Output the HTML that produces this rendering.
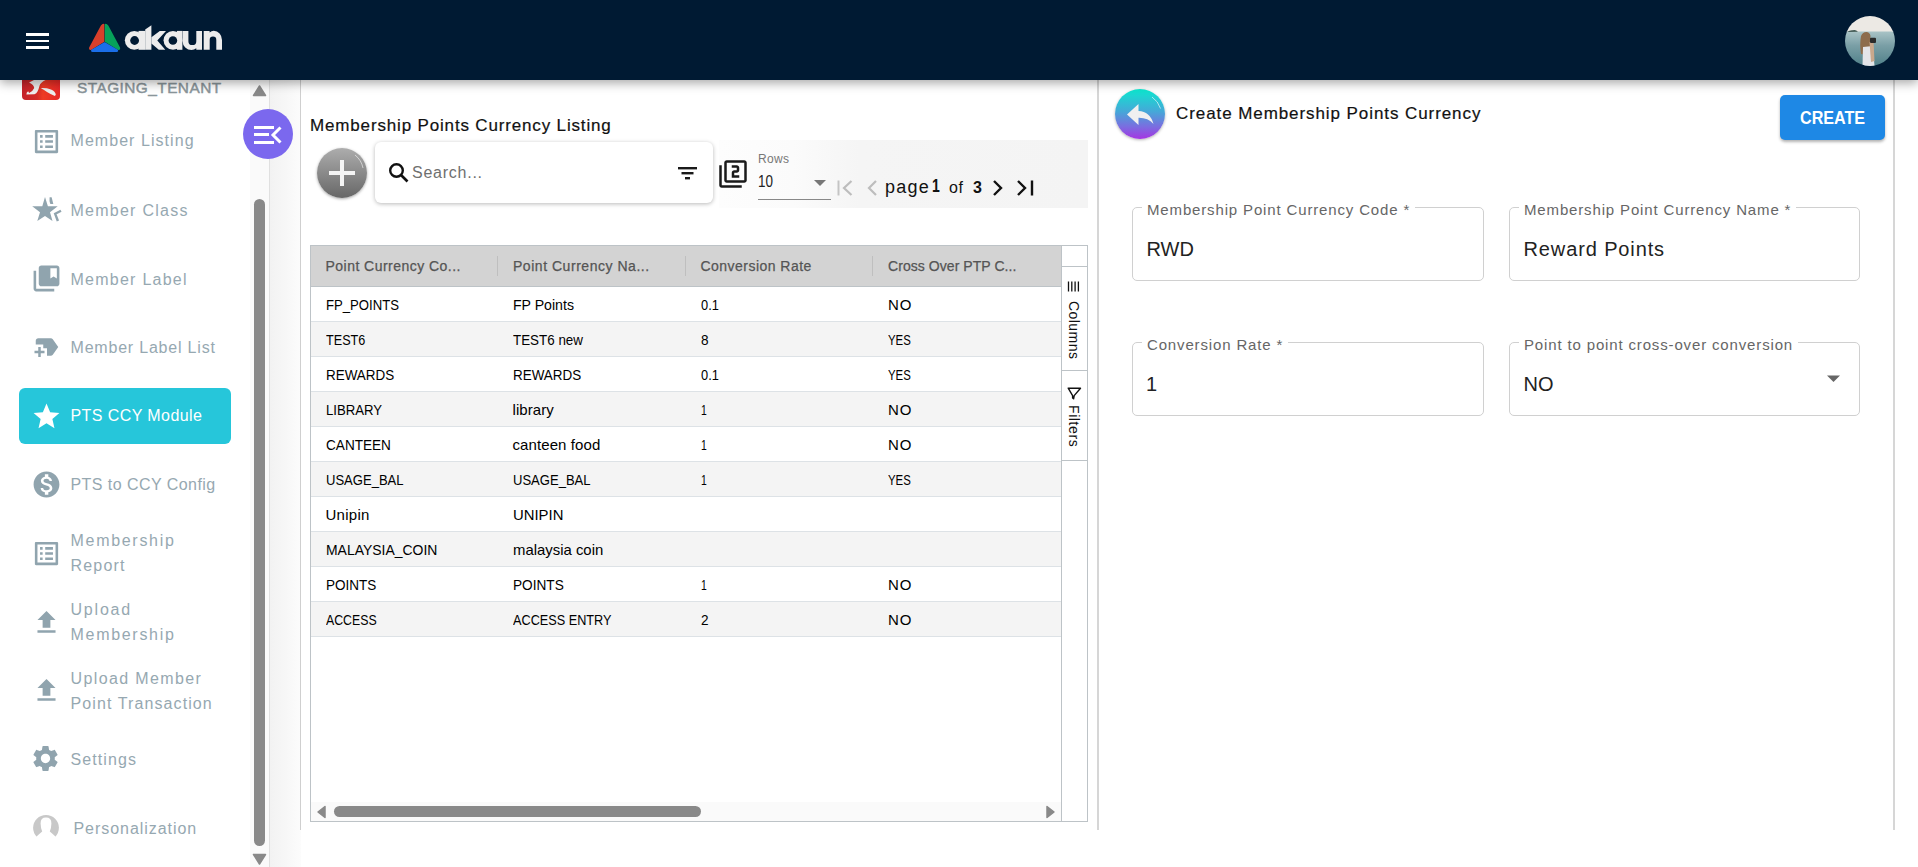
<!DOCTYPE html>
<html><head><meta charset="utf-8">
<style>
*{box-sizing:border-box;margin:0;padding:0}
html,body{width:1918px;height:867px;overflow:hidden;background:#fff;font-family:"Liberation Sans",sans-serif}
.a{position:absolute}
.t{position:absolute;white-space:nowrap;line-height:1;transform-origin:0 0}
#hdr{left:0;top:0;width:1918px;height:80px;background:#001a33;z-index:20;box-shadow:0 3px 10px rgba(0,0,0,.35)}
.hb{position:absolute;left:25.7px;width:23.6px;height:3px;background:#fff}
#side{left:0;top:80px;width:270px;height:787px;background:#fff;border-right:1px solid #e0e0e0;z-index:2}
.si{color:#96a8b1;font-size:16px;letter-spacing:.8px}
.ic{position:absolute}
#gap{left:270px;top:80px;width:31px;height:787px;background:linear-gradient(to right,#f2f2f2,#fcfcfc)}
#cp{left:300px;top:80px;width:798px;height:750px;border-left:1px solid #cfcfcf;background:#fff}
#rp{left:1097px;top:80px;width:798px;height:750px;border-left:2px solid #d6d6d6;border-right:2px solid #d6d6d6;background:#fff}
.row{position:absolute;left:311px;width:750px;height:35px;border-bottom:1px solid #dde2e6}
.row.o{background:#f4f4f4}
.c{font-size:15px;color:#000;top:10px}
.hd{font-size:14px;color:#555;-webkit-text-stroke:.25px #555}
.fld{position:absolute;border:1px solid #d0d0d0;border-radius:5px}
.lbl{position:absolute;white-space:nowrap;line-height:1;font-size:15px;color:#666;letter-spacing:.85px;background:#fff;padding:0 0px}
.val{position:absolute;white-space:nowrap;line-height:1;font-size:20px;color:#222}
</style></head>
<body>
<!-- HEADER -->
<div id="hdr" class="a">
  <div class="hb" style="top:33px"></div>
  <div class="hb" style="top:39.5px;height:2.8px"></div>
  <div class="hb" style="top:46px"></div>
  <svg class="a" style="left:86px;top:20px" width="40" height="36" viewBox="86 20 40 36">
    <g stroke-linejoin="round" stroke-width="1.6">
    <path d="M103.6 24.6 Q102.6 24.6 101.6 26 L90 47.6 Q89.5 49 90.6 49.2 L103.6 41.4 Z" fill="#d9402b" stroke="#d9402b"/>
    <path d="M105.6 24.6 Q106.6 24.6 107.6 26 L119.2 47.6 Q119.7 49 118.6 49.2 L105.6 41.4 Z" fill="#07a25a" stroke="#07a25a"/>
    <path d="M104.6 43 L92.2 50.2 Q91.3 51 92.6 51.1 L116.6 51.1 Q117.9 51 117 50.2 Z" fill="#1b6fe9" stroke="#1b6fe9"/>
    </g>
  </svg>
  <svg class="a" style="left:120px;top:20px" width="110" height="36" viewBox="120 20 110 36">
    <g fill="#ececec">
      <circle cx="134.3" cy="40.35" r="9.45"/><rect x="138.5" y="30.9" width="6.8" height="18.9"/>
      <path d="M145.2 29.6 L151.4 25.2 L151.4 49.8 L145.2 49.8 Z"/>
      <path d="M151.4 37.2 L159.8 30.9 L166 30.9 L157.3 40.4 L165.3 49.8 L158.8 49.8 L151.4 43.6 Z"/>
      <circle cx="173" cy="40.35" r="9.45"/><rect x="177" y="30.9" width="5.4" height="18.9"/>
      <path d="M182.6 30.9 H188.4 V41.15 A3.95 3.95 0 0 0 196.3 41.15 V30.9 H202 V49.8 H196.3 V48.3 Q194.2 50.1 191.6 50.1 A9 8.95 0 0 1 182.6 41.15 Z"/>
      <path d="M203.7 49.8 V30.9 H209.6 V32.4 Q211.4 30.7 213.8 30.7 A8.2 9.2 0 0 1 222 39.9 V49.8 H216.3 V39.9 A3.3 3.3 0 0 0 209.7 39.9 V49.8 Z"/>
    </g>
    <circle cx="134.6" cy="40.5" r="4.4" fill="#001a33"/><circle cx="172.9" cy="40.5" r="4.3" fill="#001a33"/>
  </svg>
  <svg class="a" style="left:1845px;top:16px" width="50" height="50" viewBox="0 0 50 50">
    <defs><clipPath id="av"><circle cx="25" cy="25" r="25"/></clipPath>
    <linearGradient id="sea" x1="0" y1="0" x2="0" y2="1"><stop offset="0" stop-color="#a9c3c6"/><stop offset=".4" stop-color="#7a9fa6"/><stop offset="1" stop-color="#4f7f88"/></linearGradient></defs>
    <g clip-path="url(#av)">
      <rect x="0" y="0" width="50" height="16" fill="#ece9e4"/>
      <rect x="0" y="15.5" width="50" height="35" fill="url(#sea)"/>
      <path d="M2 16 Q5 13.8 8 14.2 Q11 13.6 13 15.8 Z" fill="#3c5550"/>
      <path d="M16 38 Q14.5 28 16 20 Q18 15.5 22 16 Q26 17 25.5 22 L25 39 Z" fill="#8d6c4c"/>
      <path d="M18 31 L28 30 L29.5 50 L17.5 50 Z" fill="#e4e4e8"/>
      <path d="M24.5 26 L28.5 25 L29.5 45 L26 46 Z" fill="#c9a88c"/>
      <rect x="25" y="21.7" width="6" height="5.3" rx="1" fill="#2a2a2a"/>
    </g>
  </svg>
</div>

<!-- SIDEBAR -->
<div id="side" class="a">
  <div class="a" style="left:250px;top:0;width:19px;height:787px;background:#fafafa"></div>
  <div class="a" style="left:254px;top:119px;width:11px;height:647px;border-radius:6px;background:#898989"></div>
  <svg class="a" style="left:252px;top:5px" width="15" height="12"><path d="M7.5 1 L13.5 10.5 L1.5 10.5 Z" fill="#898989" stroke="#898989" stroke-width="1.5" stroke-linejoin="round"/></svg>
  <svg class="a" style="left:252px;top:773px" width="15" height="12"><path d="M1.5 1.5 L13.5 1.5 L7.5 11 Z" fill="#898989" stroke="#898989" stroke-width="1.5" stroke-linejoin="round"/></svg>
  <!-- tenant -->
  <div class="a" style="left:22px;top:-18px;width:38px;height:38px;border-radius:4px;background:linear-gradient(to right,#c4222b,#d42a26 40%,#ee3b24 55%,#e52727)">
    <svg class="a" style="left:0;top:0" width="38" height="38"><path d="M7.1 20.5 L12 18 L23.5 18 Q18.5 20.5 17.6 23.5 Q16.5 28 15.5 29.5 Q14.5 31.8 12.5 32.3 L4.4 32.5 Q4.3 30.3 6.2 29.2 L7.1 31 Q11 29 12.2 25.9 Q12 23 7.1 20.5 Z" fill="#eeeeee"/><path d="M18.8 26.2 Q24 25.8 29 27.5 Q33.5 29.5 33.8 32.8 L32.9 34 Q29 32.5 25 30 Q21.5 27.5 18.8 26.2 Z" fill="#eeeeee"/></svg>
  </div>
  <div class="t" style="left:77px;top:0.3px;font-size:15.4px;font-weight:400;color:#8a959a;letter-spacing:.45px;-webkit-text-stroke:.45px #8a959a">STAGING_TENANT</div>

  <div class="a" style="left:19px;top:308px;width:212px;height:56px;border-radius:6px;background:#26c6da"></div>
  <svg class="ic" style="left:31px;top:46px" width="31" height="31" viewBox="0 0 24 24"><path d="M19 5v14H5V5h14m1.1-2H3.9c-.5 0-.9.4-.9.9v16.2c0 .4.4.9.9.9h16.2c.4 0 .9-.5.9-.9V3.9c0-.5-.5-.9-.9-.9zM11 7h6v2h-6V7zm0 4h6v2h-6v-2zm0 4h6v2h-6zM7 7h2v2H7zm0 4h2v2H7zm0 4h2v2H7z" fill="#90a4ae"/></svg>
  <svg class="ic" style="left:28px;top:112px" width="40" height="36" viewBox="28 192 40 36"><path d="M45 197 L47.9 206.3 L57.7 206.3 L50 212.3 L52.5 221 L45 215.9 L37.3 221 L40 212.3 L32.2 206.3 L42.3 206.3 Z" fill="#90a4ae"/><path d="M49.6 197.2 L51.6 197.2 L53.3 203.9 L50.3 203.9 Q49.1 200.5 49.6 197.2Z" fill="#90a4ae"/><path d="M61 210.8 L55.2 213.8 L57.9 221" fill="none" stroke="#90a4ae" stroke-width="2.4"/></svg>
  <svg class="ic" style="left:31px;top:182.5px" width="31" height="31" viewBox="0 0 24 24"><path d="M4 6H2v14c0 1.1.9 2 2 2h14v-2H4V6zm16-4H8c-1.1 0-2 .9-2 2v12c0 1.1.9 2 2 2h12c1.1 0 2-.9 2-2V4c0-1.1-.9-2-2-2zm0 10l-2.5-1.5L15 12V4h5v8z" fill="#90a4ae"/></svg>
  <svg class="ic" style="left:31.5px;top:251.5px" width="30" height="30" viewBox="0 0 24 24"><path d="M21 12l-4.37 6.16c-.37.52-.98.84-1.63.84h-3v-6H9v-3H3V7c0-1.1.9-2 2-2h10c.65 0 1.26.31 1.63.84L21 12zm-11 3H7v-3H5v3H2v2h3v3h2v-3h3v-2z" fill="#90a4ae"/></svg>
  <svg class="ic" style="left:30.6px;top:320.5px" width="31" height="31" viewBox="0 0 24 24"><path d="M12 17.27L18.18 21l-1.64-7.03L22 9.24l-7.19-.61L12 2 9.19 8.63 2 9.24l5.46 4.73L5.82 21z" fill="#fff"/></svg>
  <svg class="ic" style="left:31px;top:388.5px" width="31" height="31" viewBox="0 0 24 24"><path d="M12 2C6.48 2 2 6.48 2 12s4.48 10 10 10 10-4.48 10-10S17.52 2 12 2zm1.41 16.09V20h-2.67v-1.93c-1.71-.36-3.16-1.460-3.27-3.4h1.96c.1 1.05.82 1.87 2.650 1.87 1.96 0 2.4-.98 2.4-1.59 0-.83-.44-1.61-2.67-2.14-2.48-.6-4.18-1.62-4.180-3.67 0-1.72 1.39-2.84 3.11-3.21V4h2.67v1.95c1.86.45 2.79 1.86 2.85 3.39H14.3c-.05-1.11-.64-1.87-2.22-1.87-1.5 0-2.4.68-2.4 1.64 0 .84.65 1.39 2.67 1.91s4.18 1.39 4.18 3.91c-.01 1.83-1.38 2.83-3.12 3.160z" fill="#90a4ae"/></svg>
  <svg class="ic" style="left:30.7px;top:458px" width="31" height="31" viewBox="0 0 24 24"><path d="M19 5v14H5V5h14m1.1-2H3.9c-.5 0-.9.4-.9.9v16.2c0 .4.4.9.9.9h16.2c.4 0 .9-.5.9-.9V3.9c0-.5-.5-.9-.9-.9zM11 7h6v2h-6V7zm0 4h6v2h-6v-2zm0 4h6v2h-6zM7 7h2v2H7zm0 4h2v2H7zm0 4h2v2H7z" fill="#90a4ae"/></svg>
  <svg class="ic" style="left:31px;top:526.8px" width="31" height="31" viewBox="0 0 24 24"><path d="M9 16h6v-6h4l-7-7-7 7h4zm-4 2h14v2H5z" fill="#90a4ae"/></svg>
  <svg class="ic" style="left:31px;top:595.2px" width="31" height="31" viewBox="0 0 24 24"><path d="M9 16h6v-6h4l-7-7-7 7h4zm-4 2h14v2H5z" fill="#90a4ae"/></svg>
  <svg class="ic" style="left:30.3px;top:663.2px" width="31" height="31" viewBox="0 0 24 24"><path d="M19.14 12.94c.04-.3.06-.61.06-.94 0-.32-.02-.64-.07-.94l2.03-1.58c.18-.14.23-.41.12-.61l-1.92-3.32c-.12-.22-.37-.29-.59-.22l-2.39.96c-.5-.38-1.03-.7-1.62-.94l-.36-2.54c-.04-.24-.24-.41-.48-.41h-3.840c-.24 0-.43.17-.47.41l-.36 2.54c-.59.24-1.130.57-1.62.94l-2.39-.96c-.22-.08-.47 0-.59.22L2.74 8.87c-.12.21-.08.47.12.61l2.03 1.58c-.05.3-.09.63-.09.94s.02.64.07.94l-2.030 1.58c-.18.14-.23.41-.12.61l1.92 3.32c.12.22.37.29.59.22l2.39-.96c.5.38 1.03.7 1.62.94l.36 2.54c.05.24.24.41.48.41h3.84c.24 0 .44-.17.47-.41l.36-2.54c.59-.24 1.13-.56 1.62-.94l2.39.96c.22.08.47 0 .59-.22l1.92-3.32c.12-.22.07-.47-.12-.61l-2.01-1.58zM12 15.6c-1.98 0-3.6-1.62-3.6-3.6s1.62-3.6 3.6-3.6 3.6 1.62 3.6 3.6-1.62 3.6-3.6 3.6z" fill="#90a4ae"/></svg>
  <svg class="ic" style="left:32px;top:734px" width="28" height="24" viewBox="32 814 28 24"><defs><clipPath id="pc"><rect x="30" y="810" width="32" height="27"/></clipPath></defs><g clip-path="url(#pc)"><circle cx="46" cy="827.8" r="12.9" fill="#c8c8c8"/><path d="M46 817.6 Q51.5 817.6 51.4 823.5 Q51.3 828 49.8 831.4 Q53 834 56 837 L36 837 Q39 834 42.2 831.4 Q40.7 828 40.6 823.5 Q40.5 817.6 46 817.6Z" fill="#fff"/></g></svg>
  <div class="t si" style="left:70.5px;top:52.5px;letter-spacing:1.05px">Member Listing</div>
  <div class="t si" style="left:70.5px;top:122.5px;letter-spacing:1.25px">Member Class</div>
  <div class="t si" style="left:70.5px;top:191.5px;letter-spacing:1.25px">Member Label</div>
  <div class="t si" style="left:70.5px;top:259.5px;letter-spacing:.8px">Member Label List</div>
  <div class="t si" style="left:70.5px;top:328px;color:#fff;letter-spacing:.42px">PTS CCY Module</div>
  <div class="t si" style="left:70.5px;top:396.5px;letter-spacing:.45px">PTS to CCY Config</div>
  <div class="t si" style="left:70.5px;top:453px;letter-spacing:1.7px">Membership</div>
  <div class="t si" style="left:70.5px;top:478px;letter-spacing:1.2px">Report</div>
  <div class="t si" style="left:70.5px;top:522px;letter-spacing:1.8px">Upload</div>
  <div class="t si" style="left:70.5px;top:547px;letter-spacing:1.7px">Membership</div>
  <div class="t si" style="left:70.5px;top:591px;letter-spacing:1.38px">Upload Member</div>
  <div class="t si" style="left:70.5px;top:616px;letter-spacing:1.1px">Point Transaction</div>
  <div class="t si" style="left:70.5px;top:671.5px;letter-spacing:1.1px">Settings</div>
  <div class="t si" style="left:73.5px;top:740.5px;letter-spacing:.95px">Personalization</div>
</div>

<div id="gap" class="a"></div>

<!-- CONTENT PANEL -->
<div id="cp" class="a"></div>
<div class="t" style="left:310px;top:117.3px;font-size:17px;color:#111;letter-spacing:.84px;-webkit-text-stroke:.2px #111">Membership Points Currency Listing</div>

<!-- purple toggle -->
<div class="a" style="left:243px;top:109px;width:50px;height:50px;border-radius:50%;background:#7b68ee;z-index:5">
  <div class="a" style="left:11px;top:17px;width:20px;height:3px;background:#fff"></div>
  <div class="a" style="left:11px;top:24px;width:15px;height:3px;background:#fff"></div>
  <div class="a" style="left:11px;top:32px;width:20px;height:3px;background:#fff"></div>
  <svg class="a" style="left:26px;top:17px" width="14" height="18"><path d="M11.5 1.5 L4 9 L11.5 16.5" fill="none" stroke="#fff" stroke-width="3"/></svg>
</div>

<!-- plus button -->
<div class="a" style="left:317px;top:148px;width:50px;height:50px;border-radius:50%;background:linear-gradient(#adadad,#676767);box-shadow:0 1px 3px rgba(0,0,0,.35)">
  <div class="a" style="left:12px;top:23px;width:26px;height:4px;background:#f4f4f4"></div>
  <div class="a" style="left:23px;top:12px;width:4px;height:26px;background:#f4f4f4"></div>
  <svg class="a" style="left:0;top:0" width="50" height="50"><path d="M38 7 A22 22 0 0 1 46 20" fill="none" stroke="rgba(255,255,255,.55)" stroke-width="1"/></svg>
</div>
<!-- search -->
<div class="a" style="left:375px;top:142px;width:338px;height:61px;border-radius:6px;background:#fff;box-shadow:0 1px 4px rgba(0,0,0,.28)"></div>
<svg class="a" style="left:388px;top:162px" width="22" height="22"><circle cx="8.5" cy="8.5" r="6.3" fill="none" stroke="#111" stroke-width="2.4"/><path d="M13 13 L19.5 19.5" stroke="#111" stroke-width="2.6"/></svg>
<div class="t" style="left:412px;top:164.5px;font-size:16px;color:#6f6f6f;letter-spacing:.75px">Search...</div>
<svg class="a" style="left:677px;top:165px" width="22" height="16"><rect x="1" y="2" width="19" height="2.4" fill="#1a1a1a"/><rect x="4.5" y="7" width="12" height="2.4" fill="#1a1a1a"/><rect x="8" y="12" width="5" height="2.4" fill="#1a1a1a"/></svg>

<!-- pagination band -->
<div class="a" style="left:719px;top:140px;width:369px;height:68px;background:linear-gradient(to right,#fdfdfd 0,#fbfbfb 20%,#f5f5f5 38%,#f4f4f4 100%)"></div>
<svg class="a" style="left:717.8px;top:159px" width="30" height="30" viewBox="0 0 24 24"><path d="M3 5H1v16c0 1.1.9 2 2 2h16v-2H3V5zm18-4H7c-1.1 0-2 .9-2 2v14c0 1.1.9 2 2 2h14c1.1 0 2-.9 2-2V3c0-1.1-.9-2-2-2zm0 16H7V3h14v14zm-4-4h-4v-2h2c1.1 0 2-.89 2-2V7c0-1.11-.9-2-2-2h-4v2h4v2h-2c-1.1 0-2 .89-2 2v4h6v-2z" fill="#1a1a1a"/></svg>
<div class="t" style="left:758px;top:153px;font-size:12px;color:#777;letter-spacing:.3px">Rows</div>
<div class="t" style="left:757.5px;top:173.5px;font-size:16px;color:#222;transform:scaleX(.84)">10</div>
<svg class="a" style="left:812px;top:178px" width="16" height="10"><path d="M2 2 L14 2 L8 8 Z" fill="#777"/></svg>
<div class="a" style="left:758px;top:199px;width:73px;height:1px;background:#888"></div>
<svg class="a" style="left:836px;top:178px" width="20" height="20"><path d="M2.5 2.5 V17.5" stroke="#c4c4c4" stroke-width="2"/><path d="M15.5 3 L8 10 L15.5 17" fill="none" stroke="#bdbdbd" stroke-width="2.2"/></svg>
<svg class="a" style="left:864px;top:178px" width="16" height="20"><path d="M12 3 L5 10 L12 17" fill="none" stroke="#bdbdbd" stroke-width="2.2"/></svg>
<div class="t" style="left:885px;top:177.5px;font-size:18px;color:#111;letter-spacing:1.2px">page</div>
<div class="t" style="left:931.5px;top:177.7px;font-size:17.5px;font-weight:700;color:#111;transform:scaleX(.8)">1</div>
<div class="t" style="left:949px;top:179.5px;font-size:16px;color:#111;letter-spacing:.5px">of</div>
<div class="t" style="left:973px;top:179.5px;font-size:16px;font-weight:700;color:#111">3</div>
<svg class="a" style="left:990px;top:178px" width="16" height="20"><path d="M4 3 L11 10 L4 17" fill="none" stroke="#111" stroke-width="2.4"/></svg>
<svg class="a" style="left:1014px;top:178px" width="22" height="20"><path d="M4 3 L11 10 L4 17" fill="none" stroke="#111" stroke-width="2.4"/><path d="M18 2.5 V17.5" stroke="#111" stroke-width="2.4"/></svg>

<!-- table -->
<div class="a" style="left:310px;top:245px;width:778px;height:577px;border:1px solid #bdc3c7"></div>
<div class="a" style="left:311px;top:246px;width:750px;height:41px;background:#d3d3d3;border-bottom:1px solid #bdc3c7"></div>
<div class="a" style="left:497px;top:256px;width:1px;height:20px;background:#bfbfbf"></div>
<div class="a" style="left:685px;top:256px;width:1px;height:20px;background:#bfbfbf"></div>
<div class="a" style="left:872px;top:256px;width:1px;height:20px;background:#bfbfbf"></div>
<div class="t hd" style="left:325.5px;top:258.8px;letter-spacing:.47px">Point Currency Co...</div>
<div class="t hd" style="left:513px;top:258.8px;letter-spacing:.53px">Point Currency Na...</div>
<div class="t hd" style="left:700.5px;top:258.8px;letter-spacing:.47px">Conversion Rate</div>
<div class="t hd" style="left:888px;top:258.8px;letter-spacing:.06px">Cross Over PTP C...</div>

<div class="row" style="top:287px"><div class="t c" style="left:14.5px;transform:scaleX(0.876)">FP_POINTS</div><div class="t c" style="left:201.5px;transform:scaleX(0.941)">FP Points</div><div class="t c" style="left:389.5px;transform:scaleX(0.855)">0.1</div><div class="t c" style="left:577px;letter-spacing:0.81px">NO</div></div>
<div class="row o" style="top:322px"><div class="t c" style="left:14.5px;transform:scaleX(0.842)">TEST6</div><div class="t c" style="left:201.5px;transform:scaleX(0.893)">TEST6 new</div><div class="t c" style="left:389.5px;transform:scaleX(0.906)">8</div><div class="t c" style="left:577px;transform:scaleX(0.760)">YES</div></div>
<div class="row" style="top:357px"><div class="t c" style="left:14.5px;transform:scaleX(0.896)">REWARDS</div><div class="t c" style="left:201.5px;transform:scaleX(0.896)">REWARDS</div><div class="t c" style="left:389.5px;transform:scaleX(0.855)">0.1</div><div class="t c" style="left:577px;transform:scaleX(0.760)">YES</div></div>
<div class="row o" style="top:392px"><div class="t c" style="left:14.5px;transform:scaleX(0.878)">LIBRARY</div><div class="t c" style="left:201.5px;letter-spacing:0.08px">library</div><div class="t c" style="left:389.5px;transform:scaleX(0.690)">1</div><div class="t c" style="left:577px;letter-spacing:0.81px">NO</div></div>
<div class="row" style="top:427px"><div class="t c" style="left:14.5px;transform:scaleX(0.906)">CANTEEN</div><div class="t c" style="left:201.5px;letter-spacing:0.09px">canteen food</div><div class="t c" style="left:389.5px;transform:scaleX(0.690)">1</div><div class="t c" style="left:577px;letter-spacing:0.81px">NO</div></div>
<div class="row o" style="top:462px"><div class="t c" style="left:14.5px;transform:scaleX(0.869)">USAGE_BAL</div><div class="t c" style="left:201.5px;transform:scaleX(0.869)">USAGE_BAL</div><div class="t c" style="left:389.5px;transform:scaleX(0.690)">1</div><div class="t c" style="left:577px;transform:scaleX(0.760)">YES</div></div>
<div class="row" style="top:497px"><div class="t c" style="left:14.5px;letter-spacing:0.28px">Unipin</div><div class="t c" style="left:201.5px;transform:scaleX(0.991)">UNIPIN</div></div>
<div class="row o" style="top:532px"><div class="t c" style="left:14.5px;transform:scaleX(0.930)">MALAYSIA_COIN</div><div class="t c" style="left:201.5px;transform:scaleX(0.993)">malaysia coin</div></div>
<div class="row" style="top:567px"><div class="t c" style="left:14.5px;transform:scaleX(0.901)">POINTS</div><div class="t c" style="left:201.5px;transform:scaleX(0.910)">POINTS</div><div class="t c" style="left:389.5px;transform:scaleX(0.690)">1</div><div class="t c" style="left:577px;letter-spacing:0.81px">NO</div></div>
<div class="row o" style="top:602px"><div class="t c" style="left:14.5px;transform:scaleX(0.821)">ACCESS</div><div class="t c" style="left:201.5px;transform:scaleX(0.846)">ACCESS ENTRY</div><div class="t c" style="left:389.5px;transform:scaleX(0.906)">2</div><div class="t c" style="left:577px;letter-spacing:0.81px">NO</div></div>

<!-- side tool panel -->
<div class="a" style="left:1061px;top:246px;width:1px;height:575px;background:#bdc3c7"></div>
<div class="a" style="left:1062px;top:266px;width:25px;height:1px;background:#bdc3c7"></div>
<div class="a" style="left:1062px;top:370px;width:25px;height:1px;background:#bdc3c7"></div>
<div class="a" style="left:1062px;top:460px;width:25px;height:1px;background:#bdc3c7"></div>
<svg class="a" style="left:1067px;top:281px" width="14" height="11"><path d="M1.5 0.5V10.5M4.8 0.5V10.5M8.1 0.5V10.5M11.4 0.5V10.5" stroke="#111" stroke-width="1.3"/></svg>
<div class="t" style="left:1081px;top:300.5px;font-size:14px;color:#111;letter-spacing:.45px;transform:rotate(90deg)">Columns</div>
<svg class="a" style="left:1066px;top:386px" width="16" height="15"><path d="M2.2 2.2 L14.5 2.2 L8.2 9.6 L7.6 12.8 L6.6 12 L6.6 9.6 Z" fill="none" stroke="#111" stroke-width="1.4" stroke-linejoin="round"/></svg>
<div class="t" style="left:1081px;top:404.5px;font-size:14px;color:#111;letter-spacing:.6px;transform:rotate(90deg)">Filters</div>

<!-- h scrollbar -->
<div class="a" style="left:311px;top:802px;width:750px;height:19px;background:#fafafa"></div>
<svg class="a" style="left:315px;top:804px" width="14" height="16"><path d="M10 2.5 L10 13.5 L3 8 Z" fill="#898989" stroke="#898989" stroke-width="1.5" stroke-linejoin="round"/></svg>
<div class="a" style="left:334px;top:806px;width:367px;height:11px;border-radius:6px;background:#898989"></div>
<svg class="a" style="left:1043px;top:804px" width="14" height="16"><path d="M4 2.5 L4 13.5 L11 8 Z" fill="#898989" stroke="#898989" stroke-width="1.5" stroke-linejoin="round"/></svg>

<!-- RIGHT PANEL -->
<div id="rp" class="a"></div>
<div class="t" style="left:1176px;top:105.3px;font-size:17px;color:#111;letter-spacing:.92px;-webkit-text-stroke:.2px #111">Create Membership Points Currency</div>
<div class="a" style="left:1780px;top:95px;width:105px;height:45px;border-radius:5px;background:#1e88e5;box-shadow:0 2px 3px rgba(0,0,0,.3)"></div>
<div class="t" style="left:1800.3px;top:108.5px;font-size:18px;font-weight:700;color:#fff;transform:scaleX(.896)">CREATE</div>

<!-- back button -->
<div class="a" style="left:1115px;top:89px;width:50px;height:50px;border-radius:50%;background:linear-gradient(#0ce8cf,#45a8d8 45%,#7a6ee0 75%,#a535e2);box-shadow:0 1px 3px rgba(0,0,0,.3)">
  <svg class="a" style="left:0;top:0" width="50" height="50"><path d="M12 25.5 L23.5 15 L23.5 22 Q35 22.5 38.5 35 Q33 28.5 23.5 28.7 L23.5 36 Z" fill="#f0f0f0"/><path d="M37 8 A22 22 0 0 1 45.5 19.5" fill="none" stroke="rgba(255,255,255,.6)" stroke-width="1"/></svg>
</div>

<div class="fld" style="left:1132px;top:207px;width:352px;height:74px"></div>
<div class="fld" style="left:1509px;top:207px;width:351px;height:74px"></div>
<div class="fld" style="left:1132px;top:342px;width:352px;height:74px"></div>
<div class="fld" style="left:1509px;top:342px;width:351px;height:74px"></div>
<div class="lbl" style="left:1142px;top:202px;padding:0 5px">Membership Point Currency Code *</div>
<div class="lbl" style="left:1519px;top:202px;padding:0 5px">Membership Point Currency Name *</div>
<div class="lbl" style="left:1142px;top:337px;padding:0 5px">Conversion Rate *</div>
<div class="lbl" style="left:1519px;top:337px;padding:0 5px">Point to point cross-over conversion</div>
<div class="val" style="left:1146.5px;top:239.1px">RWD</div>
<div class="val" style="left:1523.5px;top:239.1px;letter-spacing:.88px">Reward Points</div>
<div class="val" style="left:1146px;top:374.1px">1</div>
<div class="val" style="left:1523.5px;top:374.1px">NO</div>
<svg class="a" style="left:1825px;top:373px" width="17" height="11"><path d="M2 2.5 L15 2.5 L8.5 9 Z" fill="#666"/></svg>

</body></html>
